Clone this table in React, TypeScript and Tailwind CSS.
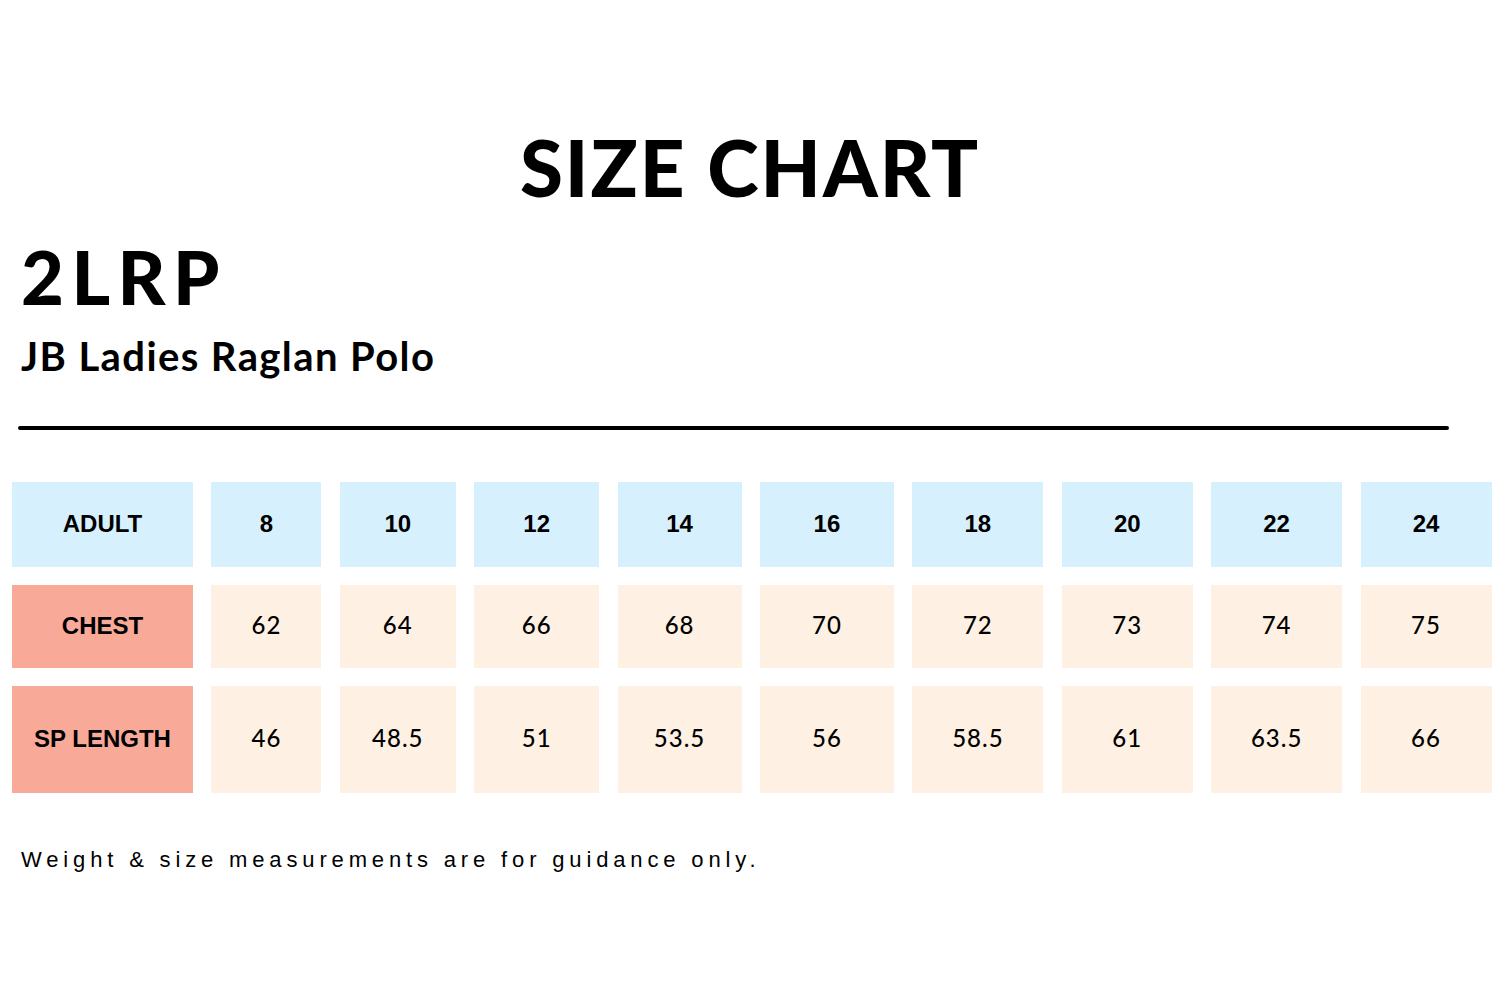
const sizes = ["8", "10", "12", "14", "16", "18", "20", "22", "24"];
const chest = ["62", "64", "66", "68", "70", "72", "73", "74", "75"];
const spLength = ["46", "48.5", "51", "53.5", "56", "58.5", "61", "63.5", "66"];

function Cell({ children, className }: { children: React.ReactNode; className: string }) {
  return <div className={`flex items-center justify-center ${className}`}>{children}</div>;
}

export default function App() {
  return (
    <div className="w-[1500px] h-[1000px] bg-white text-black overflow-hidden">
      {/* Title */}
      <h1 className="pt-[128px] text-center text-[78px] leading-none font-black tracking-[2px] font-['Lato',sans-serif]">
        SIZE CHART
      </h1>

      {/* Product */}
      <div className="pl-[21px] mt-[34px]">
        <h2 className="text-[74px] leading-none font-black tracking-[7.5px] font-['Lato',sans-serif]">2LRP</h2>
        <h3 className="mt-[22px] text-[40px] leading-none font-bold tracking-[1.4px] font-['Lato',sans-serif]">
          JB Ladies Raglan Polo
        </h3>
      </div>

      <div className="mx-[18px] mt-[50px] w-[1431px] h-[4px] rounded-full bg-black" />

      {/* Table */}
      <div className="ml-[12px] mt-[52px] grid grid-cols-[181px_110px_116px_125px_124px_134px_131px_131px_131px_131px] grid-rows-[85px_83px_107px] gap-x-[18.4px] gap-y-[18px]">
        <Cell className="bg-[#d7f0fd] pb-[2px] text-[24px] font-bold font-['Liberation_Sans',sans-serif]">ADULT</Cell>
        {sizes.map((s) => (
          <Cell key={s} className="bg-[#d7f0fd] pb-[2px] text-[24px] font-bold font-['Liberation_Sans',sans-serif]">
            {s}
          </Cell>
        ))}

        <Cell className="bg-[#f9a998] pb-[2px] text-[24px] font-bold font-['Liberation_Sans',sans-serif]">CHEST</Cell>
        {chest.map((v, i) => (
          <Cell key={i} className="bg-[#fef1e3] pb-[3px] text-[24px] font-medium font-['Lato',sans-serif] tracking-[1px]">
            {v}
          </Cell>
        ))}

        <Cell className="bg-[#f9a998] pb-[2px] text-[24px] font-bold font-['Liberation_Sans',sans-serif]">SP LENGTH</Cell>
        {spLength.map((v, i) => (
          <Cell key={i} className="bg-[#fef1e3] pb-[3px] text-[24px] font-medium font-['Lato',sans-serif] tracking-[1px]">
            {v}
          </Cell>
        ))}
      </div>

      <p className="pl-[21px] mt-[56px] text-[22px] leading-none tracking-[4.85px] font-['Liberation_Sans',sans-serif]">
        Weight &amp; size measurements are for guidance only.
      </p>
    </div>
  );
}
